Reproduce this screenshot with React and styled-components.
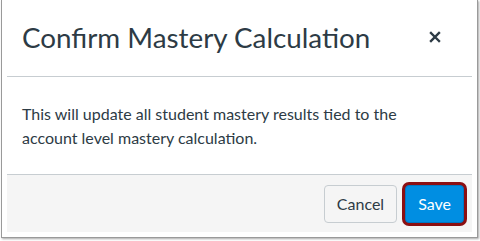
import React from 'react'
import styled, { createGlobalStyle } from 'styled-components'

const Global = createGlobalStyle`
  html, body {
    margin: 0;
    padding: 0;
    background: #ffffff;
    font-family: Lato, "Noto Sans", sans-serif;
  }
`

const Page = styled.div`
  width: 480px;
  height: 241px;
  overflow: hidden;
  background: #ffffff;
`

const Frame = styled.div`
  margin-left: 1px;
  width: 477px;
  height: 238px;
  border: 1px solid #9a9a9a;
  border-top: none;
  box-shadow: 1px 1px 2px rgba(0, 0, 0, 0.35);
  padding: 0 5px 5px 5px;
  box-sizing: border-box;
  display: flex;
  flex-direction: column;
`

const Dialog = styled.div`
  flex: 1;
  display: flex;
  flex-direction: column;
  background: #ffffff;
`

const Header = styled.div`
  height: 77px;
  border-bottom: 1px solid #c7cdd1;
  box-sizing: border-box;
  display: flex;
  align-items: center;
  justify-content: space-between;
  padding: 0 31px 2px 15px;
`

const Title = styled.h2`
  margin: 0;
  font-weight: 400;
  font-size: 27.8px;
  color: #2d3b45;
`

const Close = styled.button`
  border: none;
  background: none;
  padding: 0;
  width: 12px;
  height: 12px;
  display: flex;
  color: #2d3b45;
`

const Body = styled.div`
  flex: 1;
  padding: 25px 60px 0 15px;
  font-size: 16px;
  line-height: 24px;
  color: #2d3b45;
`

const Footer = styled.div`
  height: 58px;
  background: #f5f5f5;
  border-top: 1px solid #c7cdd1;
  box-sizing: border-box;
  display: flex;
  align-items: center;
  justify-content: flex-end;
  gap: 8px;
  padding-right: 8px;
`

const Button = styled.button`
  font-family: Lato, "Noto Sans", sans-serif;
  font-size: 16px;
  height: 38px;
  padding: 0 12px;
  border-radius: 4px;
  cursor: pointer;
  border: 1px solid ${p => (p.primary ? '#0077c2' : '#c7cdd1')};
  background: ${p => (p.primary ? '#008ee2' : '#f5f5f5')};
  color: ${p => (p.primary ? '#ffffff' : '#2d3b45')};
  box-shadow: ${p => (p.focused ? '0 0 0 3px #8b0f12' : 'none')};
`

export default function App() {
  return (
    <Page>
      <Global />
      <Frame>
        <Dialog>
          <Header>
            <Title>Confirm Mastery Calculation</Title>
            <Close aria-label="Close">
              <svg width="12" height="12" viewBox="0 0 12 12">
                <path d="M2 2 L10 10 M10 2 L2 10" stroke="currentColor" strokeWidth="2.4" strokeLinecap="square" />
              </svg>
            </Close>
          </Header>
          <Body>
            This will update all student mastery results tied to the account level mastery calculation.
          </Body>
          <Footer>
            <Button>Cancel</Button>
            <Button primary focused>Save</Button>
          </Footer>
        </Dialog>
      </Frame>
    </Page>
  )
}
